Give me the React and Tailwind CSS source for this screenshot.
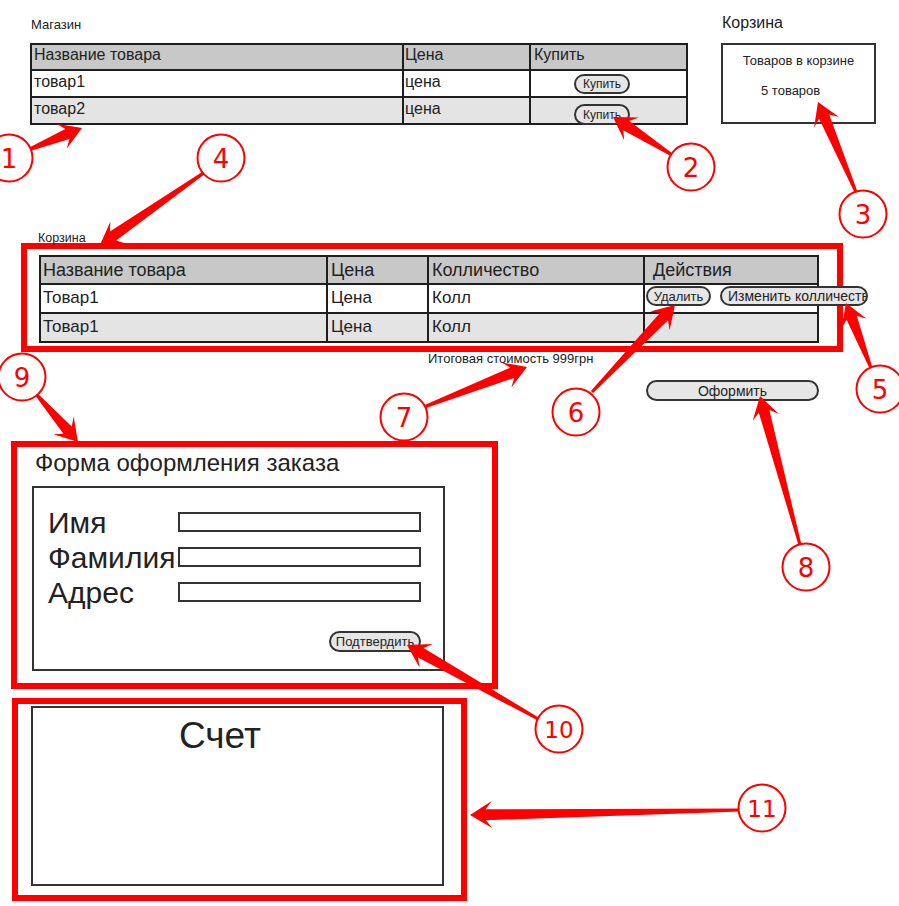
import React from "react";

const ARROWS = [
  [28, 150, 82, 128],
  [672, 155, 613, 117],
  [856, 192, 818, 102],
  [205, 172, 100, 245],
  [871, 368, 846, 303],
  [592, 392, 675, 305],
  [424, 407, 527, 367],
  [800, 545, 760, 396],
  [36, 394, 78, 442],
  [540, 720, 407, 645],
  [740, 810, 470, 815],
];

const CIRCLES = [
  [9, 158, "1"],
  [691, 167, "2"],
  [863, 214, "3"],
  [221, 158, "4"],
  [880, 389, "5"],
  [576, 412, "6"],
  [404, 417, "7"],
  [806, 567, "8"],
  [22, 377, "9"],
  [559, 729, "10"],
  [762, 808, "11"],
];

function arrowPts(x1, y1, x2, y2) {
  const tw = 3, nw = 11, hw = 27, hl = 22;
  const dx = x2 - x1, dy = y2 - y1, L = Math.hypot(dx, dy);
  const ux = dx / L, uy = dy / L, px = -uy, py = ux;
  const nx = x2 - ux * hl * 0.72, ny = y2 - uy * hl * 0.72;
  const bx = x2 - ux * hl, by = y2 - uy * hl;
  const p = [
    [x1 + (px * tw) / 2, y1 + (py * tw) / 2],
    [nx + (px * nw) / 2, ny + (py * nw) / 2],
    [bx + (px * hw) / 2, by + (py * hw) / 2],
    [x2, y2],
    [bx - (px * hw) / 2, by - (py * hw) / 2],
    [nx - (px * nw) / 2, ny - (py * nw) / 2],
    [x1 - (px * tw) / 2, y1 - (py * tw) / 2],
  ];
  return p.map((q) => q.map((v) => v.toFixed(1)).join(",")).join(" ");
}

function Annotations() {
  return (
    <svg
      className="pointer-events-none absolute left-0 top-0 z-20"
      width="899"
      height="906"
      viewBox="0 0 899 906"
    >
      {ARROWS.map((a, i) => (
        <polygon key={i} points={arrowPts(...a)} fill="#ff0000" />
      ))}
      {CIRCLES.map(([cx, cy, t]) => (
        <g key={t}>
          <circle cx={cx} cy={cy} r="23.5" fill="#ffffff" stroke="#ff0000" strokeWidth="2" />
          <text
            x={cx}
            y={cy + 1}
            textAnchor="middle"
            dominantBaseline="central"
            fill="#ff0000"
            fontFamily="'DejaVu Sans', sans-serif"
            fontSize={t.length > 1 ? 23 : 26}
          >
            {t}
          </text>
        </g>
      ))}
    </svg>
  );
}

function Pill({ className, children }) {
  return (
    <div
      className={
        "flex shrink-0 items-center justify-center whitespace-nowrap rounded-full border-2 border-[#333333] bg-[#e6e6e6] leading-none text-[#222222] " +
        className
      }
    >
      {children}
    </div>
  );
}

function ShopTable() {
  return (
    <div className="border-2 border-[#1e1e1e] text-[16px] leading-[18px]">
      <div className="flex h-[24px] bg-[#c8c8c8]">
        <div className="w-[370px] shrink-0 pl-[2px] pt-[1px]">Название товара</div>
        <div className="w-[127px] shrink-0 border-l-2 border-[#1e1e1e] pl-[1px] pt-[1px]">Цена</div>
        <div className="min-w-0 flex-1 border-l-2 border-[#1e1e1e] pl-[3px] pt-[1px]">Купить</div>
      </div>
      <div className="flex h-[27px] border-t-2 border-[#1e1e1e] bg-white">
        <div className="w-[370px] shrink-0 pl-[2px] pt-[2px]">товар1</div>
        <div className="w-[127px] shrink-0 border-l-2 border-[#1e1e1e] pl-[1px] pt-[2px]">цена</div>
        <div className="min-w-0 flex-1 border-l-2 border-[#1e1e1e]">
          <Pill className="ml-[43px] mt-[3px] h-[20px] w-[56px] text-[12px]">Купить</Pill>
        </div>
      </div>
      <div className="flex h-[27px] border-t-2 border-[#1e1e1e] bg-[#e4e4e4]">
        <div className="w-[370px] shrink-0 pl-[2px] pt-[2px]">товар2</div>
        <div className="w-[127px] shrink-0 border-l-2 border-[#1e1e1e] pl-[1px] pt-[2px]">цена</div>
        <div className="min-w-0 flex-1 border-l-2 border-[#1e1e1e]">
          <Pill className="relative ml-[43px] mt-[6px] h-[21px] w-[56px] text-[12px]">Купить</Pill>
        </div>
      </div>
    </div>
  );
}

function CartTable() {
  return (
    <div className="w-[780px] border-2 border-[#1e1e1e] text-[17px] leading-[26px]">
      <div className="flex h-[26px] bg-[#c8c8c8] text-[18px]">
        <div className="w-[285px] shrink-0 pl-[2px]">Название товара</div>
        <div className="w-[101px] shrink-0 border-l-2 border-[#1e1e1e] pl-[3px]">Цена</div>
        <div className="w-[216px] shrink-0 border-l-2 border-[#1e1e1e] pl-[3px]">Колличество</div>
        <div className="min-w-0 flex-1 border-l-2 border-[#1e1e1e] pl-[8px]">Действия</div>
      </div>
      <div className="flex h-[29px] border-t-2 border-[#1e1e1e] bg-white">
        <div className="w-[285px] shrink-0 pl-[2px]">Товар1</div>
        <div className="w-[101px] shrink-0 border-l-2 border-[#1e1e1e] pl-[3px]">Цена</div>
        <div className="w-[216px] shrink-0 border-l-2 border-[#1e1e1e] pl-[3px]">Колл</div>
        <div className="flex min-w-0 flex-1 items-start border-l-2 border-[#1e1e1e]">
          <Pill className="ml-[1px] mt-[1px] h-[20px] w-[65px] text-[13px]">Удалить</Pill>
          <div className="relative z-10 ml-[9px] mt-[1px] flex h-[20px] w-[148px] shrink-0 items-center overflow-hidden whitespace-nowrap rounded-full border-2 border-[#333333] bg-[#e6e6e6] pl-[6px] text-[14px] leading-none text-[#222222]">
            Изменить колличество
          </div>
        </div>
      </div>
      <div className="flex h-[29px] border-t-2 border-[#1e1e1e] bg-[#e4e4e4]">
        <div className="w-[285px] shrink-0 pl-[2px]">Товар1</div>
        <div className="w-[101px] shrink-0 border-l-2 border-[#1e1e1e] pl-[3px]">Цена</div>
        <div className="w-[216px] shrink-0 border-l-2 border-[#1e1e1e] pl-[3px]">Колл</div>
        <div className="min-w-0 flex-1 border-l-2 border-[#1e1e1e]"></div>
      </div>
    </div>
  );
}

function Field({ label }) {
  return (
    <div className="flex h-[35px] items-start">
      <div className="w-[130px] shrink-0 whitespace-nowrap text-[30px] leading-[35px]">{label}</div>
      <div className="mt-[7px] h-[20px] w-[243px] shrink-0 border-2 border-[#333333] bg-white"></div>
    </div>
  );
}

export default function App() {
  return (
    <div className="relative h-[906px] w-[899px] overflow-hidden bg-white font-['Liberation_Sans',Arial,sans-serif] text-[#222222]">
      {/* Shop + mini cart */}
      <div className="flex items-start pl-[30px] pt-[17px]">
        <div className="w-[658px] shrink-0">
          <div className="h-[26px] pl-[1px] text-[13px] leading-[15px]">Магазин</div>
          <ShopTable />
        </div>
        <div className="ml-[33px] w-[155px] shrink-0">
          <div className="-mt-[4px] h-[30px] pl-[1px] text-[16px] leading-[20px]">Корзина</div>
          <div className="h-[81px] border-2 border-[#333333] pt-[8px] text-[13px] leading-[15px]">
            <div className="text-center">Товаров в корзине</div>
            <div className="mt-[15px] pl-[38px]">5 товаров</div>
          </div>
        </div>
      </div>

      {/* Cart */}
      <div className="mt-[107px]">
        <div className="h-[11px] pl-[38px] text-[12.5px] leading-[13px]">Корзина</div>
        <div className="ml-[21px] h-[109px] w-[822px] border-[6px] border-[#ff0000] pl-[12px] pt-[6px]">
          <CartTable />
        </div>
        <div className="-mt-[1px] h-[15px] pl-[428px] text-[13px] leading-[15px]">Итоговая стоимость 999грн</div>
        <Pill className="ml-[646px] mt-[14px] h-[21px] w-[173px] text-[14px]">Оформить</Pill>
      </div>

      {/* Order form */}
      <div className="ml-[11px] mt-[40px] h-[248px] w-[487px] border-[6px] border-[#ff0000]">
        <div className="h-[39px] pl-[18px] pt-[4px] text-[24px] leading-[24px]">Форма оформления заказа</div>
        <div className="ml-[15px] h-[185px] w-[413px] border-2 border-[#333333] pl-[14px] pt-[17px]">
          <Field label="Имя" />
          <Field label="Фамилия" />
          <Field label="Адрес" />
          <Pill className="ml-[281px] mt-[21px] h-[21px] w-[92px] text-[13px]">Подтвердить</Pill>
        </div>
      </div>

      {/* Invoice */}
      <div className="ml-[12px] mt-[9px] h-[203px] w-[455px] border-[6px] border-[#ff0000]">
        <div className="ml-[13px] mt-[2px] h-[180px] w-[413px] border-2 border-[#333333] pl-[146px] pt-[8px] text-[37px] leading-[40px]">
          Счет
        </div>
      </div>

      <Annotations />
    </div>
  );
}
